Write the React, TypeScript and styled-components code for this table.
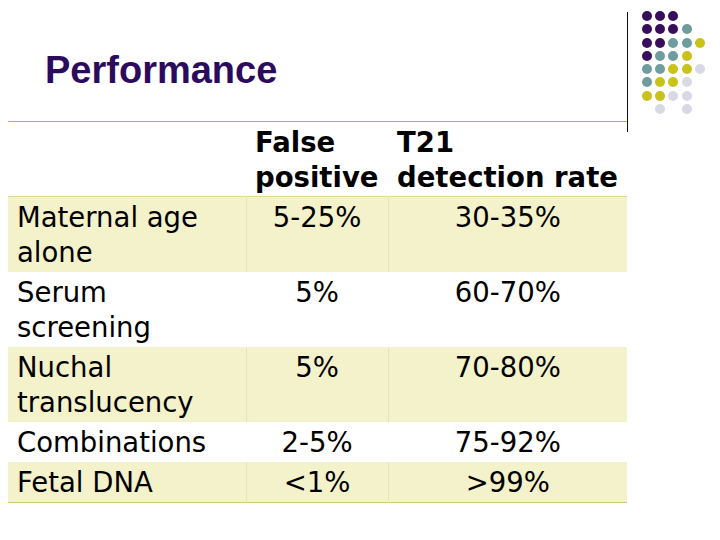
import styled, { createGlobalStyle } from "styled-components";

const GlobalStyle = createGlobalStyle`
  html, body {
    margin: 0;
    padding: 0;
    background: #ffffff;
  }
`;

const Page = styled.div`
  width: 720px;
  height: 540px;
  padding-left: 8px;
  box-sizing: border-box;
  background: #ffffff;
  overflow: hidden;
`;

const Top = styled.div`
  display: flex;
  height: 123px;
`;

const TitleBar = styled.div`
  width: 619px;
  height: 122px;
  border-bottom: 1px solid #bcb44e;
  padding: 49px 0 0 37px;
  box-sizing: border-box;
  flex: none;
`;

const Title = styled.h1`
  margin: 0;
  font-family: "Liberation Sans", Arial, sans-serif;
  font-weight: bold;
  font-size: 38px;
  line-height: 1.15;
  color: #2d0b5c;
`;

const Decor = styled.div`
  display: flex;
  align-items: flex-start;
  height: 123px;
`;

const Rule = styled.div`
  width: 1px;
  height: 120px;
  margin-top: 12px;
  background: #111111;
  flex: none;
`;

const Dots = styled.div`
  display: grid;
  grid-template-columns: repeat(5, 10px);
  grid-auto-rows: 10px;
  column-gap: 3.2px;
  row-gap: 3.3px;
  margin: 11px 0 0 14px;
`;

const dotColors: Record<string, string> = {
  P: "#380e5c",
  T: "#6f9c9c",
  Y: "#c9c21a",
  L: "#d9d9e6",
  _: "transparent",
};

const Dot = styled.span<{ $tone: string }>`
  width: 10px;
  height: 10px;
  border-radius: 50%;
  background: ${(p) => dotColors[p.$tone]};
`;

const dotRows = [
  "PPP__",
  "PPPT_",
  "PPTTY",
  "PTTY_",
  "TTYYL",
  "TYYL_",
  "YYLL_",
  "_L_L_",
];

const Table = styled.table`
  width: 619px;
  border-collapse: collapse;
  table-layout: fixed;
  font-family: "DejaVu Sans", Verdana, sans-serif;
  font-size: 27.5px;
  line-height: 35px;
  color: #000000;
  border-bottom: 1px solid #d2ca6e;
`;

const HeadRow = styled.tr`
  border-bottom: 1px solid #e2da8e;
`;

const HeadCell = styled.th`
  font-weight: bold;
  text-align: left;
  vertical-align: bottom;
  padding: 0 0 1px 9px;
  height: 72px;
  white-space: nowrap;
`;

const Row = styled.tr<{ $shaded?: boolean }>`
  background: ${(p) => (p.$shaded ? "#f3f2cb" : "#ffffff")};
`;

const Cell = styled.td<{ $first?: boolean; $shaded?: boolean }>`
  vertical-align: top;
  padding: 3px 0 2px ${(p) => (p.$first ? "9px" : "0")};
  text-align: ${(p) => (p.$first ? "left" : "center")};
  white-space: nowrap;
  border-left: ${(p) =>
    p.$first ? "none" : `1px solid ${p.$shaded ? "#e6e3b4" : "#ffffff"}`};
`;

const rows = [
  { label: ["Maternal age", "alone"], fp: "5-25%", dr: "30-35%", shaded: true },
  { label: ["Serum", "screening"], fp: "5%", dr: "60-70%", shaded: false },
  { label: ["Nuchal", "translucency"], fp: "5%", dr: "70-80%", shaded: true },
  { label: ["Combinations"], fp: "2-5%", dr: "75-92%", shaded: false },
  { label: ["Fetal DNA"], fp: "<1%", dr: ">99%", shaded: true },
];

export default function App() {
  return (
    <>
      <GlobalStyle />
      <Page>
        <Top>
          <TitleBar>
            <Title>Performance</Title>
          </TitleBar>
          <Decor>
            <Rule />
            <Dots>
              {dotRows.map((r, i) =>
                r.split("").map((c, j) => <Dot key={`${i}-${j}`} $tone={c} />)
              )}
            </Dots>
          </Decor>
        </Top>
        <Table>
          <colgroup>
            <col style={{ width: 238 }} />
            <col style={{ width: 142 }} />
            <col style={{ width: 239 }} />
          </colgroup>
          <thead>
            <HeadRow>
              <HeadCell></HeadCell>
              <HeadCell>
                False
                <br />
                positive
              </HeadCell>
              <HeadCell>
                T21
                <br />
                detection rate
              </HeadCell>
            </HeadRow>
          </thead>
          <tbody>
            {rows.map((r) => (
              <Row key={r.label[0]} $shaded={r.shaded}>
                <Cell $first $shaded={r.shaded}>
                  {r.label.map((l, i) => (
                    <span key={l}>
                      {i > 0 && <br />}
                      {l}
                    </span>
                  ))}
                </Cell>
                <Cell $shaded={r.shaded}>{r.fp}</Cell>
                <Cell $shaded={r.shaded}>{r.dr}</Cell>
              </Row>
            ))}
          </tbody>
        </Table>
      </Page>
    </>
  );
}
